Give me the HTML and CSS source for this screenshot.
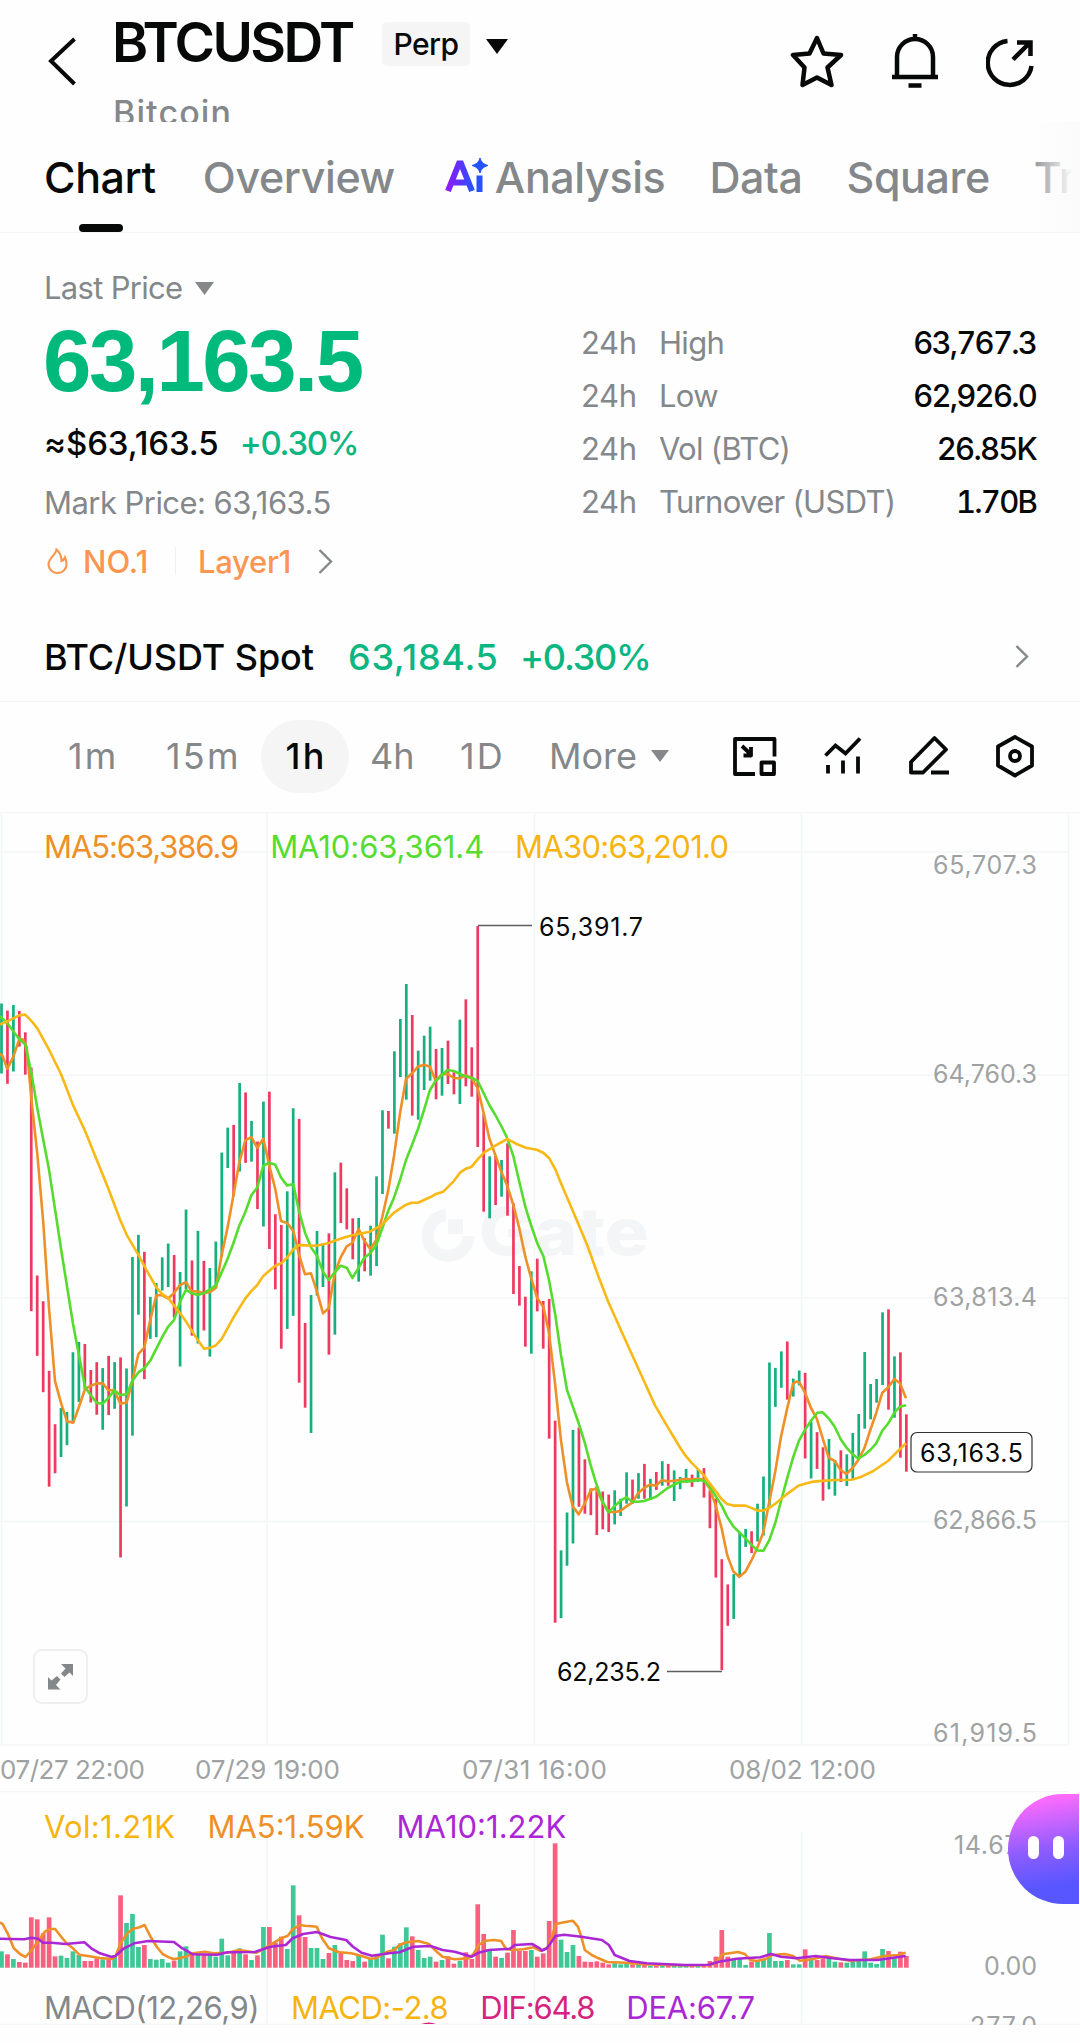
FILE: index.html
```html
<!DOCTYPE html>
<html lang="en">
  <head>
    <meta charset="UTF-8" />
    <meta name="viewport" content="width=device-width, initial-scale=1.0" />
    <title>BTCUSDT Perp</title>
    <link rel="stylesheet" href="styles.css">
  </head>
  <body>
    <header class="header">
      <svg class="back" width="34" height="52" viewBox="0 0 34 52"><path d="M28.500 4 5 26l23.500 23" /></svg>
      <div class="pair">
        <div class="pair-row">
          <h1>BTCUSDT</h1>
          <span class="perp">Perp</span>
          <svg width="22" height="15" viewBox="0 0 22 15"><path d="M0 0h22L11 15z" fill="#070808" /></svg>
        </div>
        <div class="pair-name">Bitcoin</div>
      </div>
      <div class="header-icons">
        <svg width="54" height="54" viewBox="0 0 54 54"><path d="M27 4l6.500 15.500 17.500 1.500-13.500 12.500 4 17.500L27 43.500 12.500 51l2-17.500L3 21l16.500-1.500z" stroke-linejoin="round" /></svg>
        <svg width="46" height="54" viewBox="0 0 46 54"><path d="M23 0v6M5 43V23a18 18 0 0 1 36 0v20M0 43h46M16.500 51.500h13" /></svg>
        <svg width="48" height="54" viewBox="0 0 48 54"><path d="M21.500 7A22 22 0 1 0 45.500 32M27 25.500 43.500 9M31 8.500h13.500V22" /></svg>
      </div>
    </header>

    <nav class="tabs">
      <a class="tab active">Chart</a>
      <a class="tab">Overview</a>
      <a class="tab tab-ai">
        <svg width="44" height="36" viewBox="0 0 44 36">
          <defs>
            <linearGradient id="ai" x1="0" x2="1"><stop offset="0" stop-color="#8a1cff" /><stop offset="0.7" stop-color="#4b3dff" /><stop offset="1" stop-color="#2453ff" /></linearGradient>
          </defs>
          <path d="M3 33 14 5.500h2L27 33M7.500 24.500h15" fill="none" stroke="url(#ai)" stroke-width="6" />
          <path d="M34.500 17.500V34" stroke="#2b50ff" stroke-width="6" />
          <path d="M35 0q1.500 6 8 7.500-6.500 1.500-8 7.500-1.500-6-8-7.500Q33.500 6 35 0z" fill="#2453ff" stroke="#2453ff" stroke-linejoin="round" />
        </svg>
        <span>Analysis</span>
      </a>
      <a class="tab tab-data">Data</a>
      <a class="tab tab-square">Square</a>
      <a class="tab tab-trade">Trade</a>
    </nav>

    <section class="summary">
      <div class="price-col">
        <div class="last-label">Last Price <svg width="19" height="13" viewBox="0 0 19 13"><path d="M0 0h19L9.500 13z" fill="#84888a" /></svg></div>
        <div class="last-price">63,163.5</div>
        <div class="fiat"><span>≈$63,163.5</span><span class="up">+0.30%</span></div>
        <div class="mark">Mark Price: 63,163.5</div>
        <div class="tags">
          <svg class="flame" width="21" height="26" viewBox="0 0 21 26"><path d="M9.500 1.500C9.500 6 1.500 10 1.500 16.500a9 8.500 0 0 0 18 0c0-3-.5-5-1.500-7-.8 2-1.800 3-3.500 3.500C14.500 8 12.500 4 9.500 1.500z" /></svg>
          <span class="tag-no">NO.1</span>
          <i class="tag-line"></i>
          <span class="tag-layer">Layer1</span>
          <svg class="arrow" width="15" height="25" viewBox="0 0 15 25"><path d="M1.500 1 13 12.500 1.500 24" /></svg>
        </div>
      </div>
      <div class="stats">
        <div class="stat"><span class="day">24h</span><span class="name">High</span><b>63,767.3</b></div>
        <div class="stat"><span class="day">24h</span><span class="name">Low</span><b>62,926.0</b></div>
        <div class="stat"><span class="day">24h</span><span class="name">Vol (BTC)</span><b>26.85K</b></div>
        <div class="stat"><span class="day">24h</span><span class="name">Turnover (USDT)</span><b>1.70B</b></div>
      </div>
    </section>

    <section class="spot">
      <span class="spot-name">BTC/USDT Spot</span>
      <span class="spot-price">63,184.5</span>
      <span class="spot-change">+0.30%</span>
      <svg class="arrow" width="14" height="23" viewBox="0 0 14 23"><path d="M1.500 1 12 11.500 1.500 22" /></svg>
    </section>

    <section class="toolbar">
      <div class="intervals">
        <span class="m1">1m</span>
        <span class="m15">15m</span>
        <span class="h1 selected">1h</span>
        <span class="h4">4h</span>
        <span class="d1">1D</span>
        <span class="more">More <svg width="18" height="12" viewBox="0 0 18 12"><path d="M0 0h18L9 12z" fill="#84888a" /></svg></span>
      </div>
      <div class="tools">
        <svg width="44" height="44" viewBox="0 0 44 44"><path d="M41.500 22.500V5H2v35h20M28.500 28.500H41V40H28.500zM9 12l9 8.500M10.500 21.500H18V13" stroke-linejoin="round" /></svg>
        <svg width="38" height="44" viewBox="0 0 38 44"><path d="M1.500 21.500 11.500 11.500 21.500 19.500 36 4.500M4 31v8.500M19 26.500v13M34 22.500v17" /></svg>
        <svg width="40" height="44" viewBox="0 0 40 44"><path d="M25.500 4 37 15.500 14 38.500H2V28zM22 38.500h18" stroke-linejoin="round" /></svg>
        <svg width="38" height="44" viewBox="0 0 38 44"><path d="M19 3l17 9.500v19L19 41.500 2 31.500v-19z" stroke-linejoin="round" /><circle cx="19" cy="22" r="5" /></svg>
      </div>
    </section>

    <section class="price-chart">
      <svg id="priceChart" width="1080" height="979" viewBox="0 812 1080 979">
        <g class="grid">
          <path d="M0 812.500H1080M0 852H1068M0 1075H1068M0 1298H1068M0 1521.500H1068M0 1745H1068" />
          <path d="M1.500 812V1745M267 812V1745M534.500 812V1745M801.500 812V1745M1068.500 812V1745" />
        </g>
        <g class="watermark">
          <path d="M446 1215a20.500 20.500 0 1 0 22.500 21" />
          <rect x="448" y="1219" width="15" height="15" />
          <text x="479" y="1255" textLength="170" lengthAdjust="spacingAndGlyphs">Gate</text>
        </g>
        <g id="candles"></g>
        <g id="averages" class="line"></g>
        <g class="callout">
          <path d="M478 925.500H532M667 1671.500H722" />
          <text x="539" y="936" textLength="104">65,391.7</text>
          <text x="557" y="1681" textLength="104">62,235.2</text>
        </g>
        <g class="axis">
          <text x="933" y="874" textLength="104">65,707.3</text>
          <text x="933" y="1083" textLength="104">64,760.3</text>
          <text x="933" y="1306" textLength="104">63,813.4</text>
          <text x="933" y="1529" textLength="104">62,866.5</text>
          <text x="933" y="1742" textLength="104">61,919.5</text>
        </g>
        <g class="axis date">
          <text x="0" y="1779" textLength="145">07/27 22:00</text>
          <text x="195" y="1779" textLength="145">07/29 19:00</text>
          <text x="462" y="1779" textLength="145">07/31 16:00</text>
          <text x="729" y="1779" textLength="147">08/02 12:00</text>
        </g>
        <g class="current">
          <rect x="911" y="1432.500" width="121" height="39.500" rx="6" />
          <text x="920" y="1461.500" textLength="103">63,163.5</text>
        </g>
      </svg>
      <div class="legend legend-ma">
        <span class="orange ma5">MA5:63,386.9</span>
        <span class="green ma10">MA10:63,361.4</span>
        <span class="yellow ma30">MA30:63,201.0</span>
      </div>
      <div class="expand">
        <svg width="26" height="27" viewBox="0 0 26 27"><path d="M13 1h12v12l-3.500-3.500-5 4.500-3.500-3.500 4.500-5zM0 14l3.500 3.500L9 13l3.500 3.500L8 22l4.500 4.500H0z" fill="#84888a" /></svg>
      </div>
    </section>

    <section class="volume-chart">
      <svg id="volumeChart" width="1080" height="234" viewBox="0 1791 1080 234">
        <g class="grid">
          <path d="M0 1791.500H1068M0 2024.500H1080M267 1832V2024M534.500 1832V2024M801.500 1832V2024" />
        </g>
        <g id="volumes"></g>
        <g id="volumeAverages" class="line"></g>
        <path d="M421 2024q8-3 15 0z" fill="#d6247e" />
        <g class="axis">
          <text x="954" y="1854" textLength="82">14.67K</text>
          <text x="984" y="1975" textLength="53">0.00</text>
          <text x="970" y="2035" textLength="67">277.0</text>
        </g>
      </svg>
      <div class="legend legend-vol">
        <span class="yellow vol">Vol:1.21K</span>
        <span class="orange">MA5:1.59K</span>
        <span class="purple">MA10:1.22K</span>
      </div>
      <div class="legend legend-macd">
        <span class="gray">MACD(12,26,9)</span>
        <span class="yellow">MACD:-2.8</span>
        <span class="pink">DIF:64.8</span>
        <span class="purple dea">DEA:67.7</span>
      </div>
      <div class="assistant"><i></i><i></i></div>
    </section>

    <script src="chart.js"></script>
  </body>
</html>
```

FILE: styles.css
```css
* {
  margin: 0;
  padding: 0;
  box-sizing: border-box;
}

body {
  width: 1080px;
  height: 2043px;
  overflow: hidden;
  background: #fefefe;
  color: #070808;
  font-family: Inter, "Liberation Sans", sans-serif;
  font-size: 31px;
}

svg {
  display: block;
  flex: none;
}

/* header */
.header {
  display: flex;
  height: 122px;
  overflow: hidden;
  padding: 0 46px;
}

.back {
  margin-top: 35px;
}

.back path {
  fill: none;
  stroke: #070808;
  stroke-width: 4;
}

.pair {
  margin-left: 32px;
}

.pair-row {
  display: flex;
  align-items: center;
  height: 84px;
}

h1 {
  width: 270px;
  font-size: 55px;
  font-weight: 600;
  letter-spacing: -2.6px;
}

.perp {
  width: 88px;
  height: 44px;
  margin: 4px 16px 0 0;
  border-radius: 5px;
  background: #f5f5f5;
  font-size: 30px;
  font-weight: 500;
  line-height: 44px;
  text-align: center;
  letter-spacing: -0.5px;
}

.pair-row svg {
  margin-top: 8px;
}

.pair-name {
  padding-left: 1px;
  color: #84888a;
  font-size: 34px;
  font-weight: 500;
  line-height: 58px;
  letter-spacing: 1.1px;
}

.header-icons {
  display: flex;
  gap: 48px;
  margin: 34px 0 0 auto;
}

.header-icons path {
  fill: none;
  stroke: #070808;
  stroke-width: 4.5;
}

/* tabs */
.tabs {
  position: relative;
  display: flex;
  align-items: center;
  gap: 47px;
  height: 111px;
  padding-left: 44px;
  overflow: hidden;
  border-bottom: 1px solid #f3f4f5;
  font-size: 43px;
  font-weight: 500;
  letter-spacing: -0.4px;
  white-space: nowrap;
  color: #84888a;
}

.tabs::after {
  content: "";
  position: absolute;
  top: 0;
  right: 0;
  width: 48px;
  height: 110px;
  background: linear-gradient(90deg, rgba(254, 254, 254, 0.1), #fbfbfb 85%);
}

.tab {
  position: relative;
}

.tab.active {
  color: #070808;
}

.tab.active::after {
  content: "";
  position: absolute;
  left: 35px;
  bottom: -29px;
  width: 44px;
  height: 8px;
  border-radius: 4px;
  background: #070808;
}

.tab-ai {
  display: flex;
  gap: 6px;
  margin-left: 3px;
}

.tab-ai svg {
  margin-top: 7px;
}

.tab-data,
.tab-square,
.tab-trade {
  margin-left: -3px;
}

/* price summary */
.summary {
  display: flex;
  justify-content: space-between;
  height: 379px;
  padding: 34px 44px 0 44px;
  color: #84888a;
}

.last-label {
  display: flex;
  align-items: center;
  gap: 13px;
  line-height: 42px;
  letter-spacing: -0.7px;
}

.last-price {
  margin-left: -1px;
  color: #00ba7c;
  font-family: "Liberation Sans", sans-serif;
  font-size: 87px;
  font-weight: 700;
  line-height: 104px;
  letter-spacing: -2.5px;
}

.fiat {
  display: flex;
  color: #070808;
  font-size: 33px;
  font-weight: 500;
  line-height: 60px;
  letter-spacing: -0.1px;
}

.up {
  margin-left: 21px;
  color: #0cb681;
  letter-spacing: -1.3px;
}

.mark {
  line-height: 60px;
  letter-spacing: -0.55px;
}

.tags {
  display: flex;
  align-items: center;
  height: 56px;
  color: #fb9650;
  font-weight: 500;
}

.flame {
  margin: 0 15px 0 3px;
}

.flame path {
  fill: none;
  stroke: #fb9650;
  stroke-width: 2.2;
}

.tag-no {
  width: 92px;
}

.tag-line {
  width: 1px;
  height: 28px;
  background: #f0f0f0;
}

.tag-layer {
  width: 120px;
  padding-left: 22px;
  letter-spacing: -0.3px;
}

.tag-layer + .arrow {
  margin-left: 22px;
}

.arrow path {
  fill: none;
  stroke: #84888a;
  stroke-width: 2.4;
}

.stats {
  width: 455px;
  padding-top: 49px;
}

.stat {
  display: flex;
  line-height: 53px;
  letter-spacing: -0.7px;
}

.stat .day {
  width: 78px;
  letter-spacing: -0.4px;
}

.stat b {
  margin-left: auto;
  color: #070808;
  font-weight: 500;
  font-variant-numeric: tabular-nums;
  letter-spacing: -1.8px;
}

/* spot row */
.spot {
  display: flex;
  align-items: center;
  height: 90px;
  padding: 0 51px 0 44px;
  border-bottom: 1px solid #f3f4f5;
  font-size: 36px;
  font-weight: 500;
}

.spot-name {
  width: 304px;
  letter-spacing: -0.1px;
}

.spot-price {
  width: 172px;
  color: #0cb681;
  letter-spacing: 0.7px;
}

.spot-change {
  color: #0cb681;
  letter-spacing: -1.2px;
}

.spot .arrow {
  margin-left: auto;
}

/* intervals and tools */
.toolbar {
  display: flex;
  align-items: center;
  justify-content: space-between;
  height: 110px;
  padding: 0 46px 2px 68px;
}

.intervals {
  display: flex;
  align-items: center;
  color: #84888a;
  font-size: 36px;
}

.m1,
.m15,
.h1 {
  letter-spacing: 2.2px;
}

.m1 {
  width: 98px;
}

.m15 {
  width: 95px;
}

.selected {
  width: 88px;
  height: 73px;
  padding-left: 2px;
  border-radius: 37px;
  background: #f5f5f5;
  color: #070808;
  font-weight: 500;
  line-height: 73px;
  text-align: center;
}

.h4 {
  width: 90px;
  padding-left: 21px;
}

.d1 {
  width: 88px;
  padding-left: 21px;
  letter-spacing: 2px;
}

.more {
  display: flex;
  align-items: center;
  gap: 14px;
  padding-left: 22px;
}

.tools {
  display: flex;
  gap: 47px;
}

.tools path,
.tools circle {
  fill: none;
  stroke: #070808;
  stroke-width: 3.8;
}

/* charts */
.price-chart,
.volume-chart {
  position: relative;
}

.grid path {
  fill: none;
  stroke: #f4f5f6;
  stroke-width: 1.5;
}

.line path {
  fill: none;
  stroke-width: 2.6;
  stroke-linejoin: round;
}

.watermark path {
  fill: none;
  stroke: #f4f5f6;
  stroke-width: 12;
}

.watermark rect,
.watermark text {
  fill: #f4f5f6;
}

.watermark text {
  font-size: 66px;
  font-weight: 800;
}

.axis text,
.callout text,
.current text {
  font-size: 25px;
  fill: #9fa2a3;
}

.axis.date text {
  font-size: 26px;
}

.callout path {
  stroke: #5c5e60;
  stroke-width: 1.4;
}

.callout text,
.current text {
  fill: #070808;
}

.current rect {
  fill: #fefefe;
  stroke: #333;
  stroke-width: 1.2;
}

.legend {
  position: absolute;
  left: 44px;
  display: flex;
  gap: 32px;
  line-height: 40px;
  white-space: nowrap;
}

.legend-ma {
  top: 15px;
}

.ma5 {
  letter-spacing: -1.1px;
}

.ma10 {
  letter-spacing: -0.1px;
}

.ma30 {
  margin-left: -1px;
  letter-spacing: -0.7px;
}

.legend-vol {
  top: 16px;
}

.vol {
  letter-spacing: 0.3px;
}

.legend-macd {
  top: 197px;
  letter-spacing: -0.5px;
}

.orange {
  color: #ee9027;
}

.green {
  color: #56dc2e;
}

.yellow {
  color: #f8b40e;
}

.purple {
  color: #ab27d5;
}

.pink {
  color: #d6247e;
  letter-spacing: -1.2px;
}

.dea {
  letter-spacing: -0.2px;
}

.gray {
  color: #84888a;
}

.expand {
  position: absolute;
  left: 33px;
  top: 837px;
  display: flex;
  align-items: center;
  justify-content: center;
  width: 55px;
  height: 55px;
  border: 2px solid #efefef;
  border-radius: 9px;
  background: #fefefe;
}

.assistant {
  position: absolute;
  top: 3px;
  right: 1px;
  display: flex;
  gap: 14px;
  width: 71px;
  height: 110px;
  padding: 42px 0 0 20px;
  border-radius: 55px 0 0 55px;
  background: linear-gradient(170deg, #ff6bfd 8%, #8b5cff 52%, #5856ff 82%);
}

.assistant i {
  width: 11px;
  height: 23px;
  border-radius: 6px;
  background: #fff;
}
```

FILE: chart.js
```js
const STEP = 5.953;
const FIRST = 1.5;
const UP = "#16b07f";
const DOWN = "#ee3a60";
const VOLUME_BASE = 1967.7;

// each block: origin y, units per pixel, then g (rising) or r (falling) with high,low
const candleBlocks = [
  [960, 2.529, `g110,287 r128,313 g114,282 r129,219 r183,290 r272,888 r798,1001 r863,1093 r1039,1332
    r1174,1298 g1133,1257 g1143,1227 g992,1170 g966,1118 r971,1085 r1037,1119 r1017,1150 g1032,1188
    r1001,1151 g1017,1135 r1005,1511 g1033,1382 g751,1203 g695,897 r738,1060 g852,958 g817,954
    g752,836 g717,827 r746,904 g789,1028 g631,832 r760,950 g685,970 r761,937 g779,1003 g712,830
    g487,750 g424,526 r417,597 g311,535 r335,513 g407,510 r459,630 g358,674 r333,731 r643,833
    r670,983 g585,933 g375,900 r402,1069`],
  [900, 3, `r1269,1523 g1185,1599 g993,1187 g1030,1161 r1000,1364 g817,1304 r788,969 r865,988
    r955,1078 g954,1145 r1015,1114 g977,1127 g829,1098 g631,882 r633,686 g454,701 g357,531
    g252,599 r345,647 g452,659 g407,570 g380,542 r447,598 g444,587 r422,552 r517,583 g359,612
    r298,559 r442,590 r78,741 r642,935 g769,955 r768,915 g780,890 r730,947 r910,1182 r1098,1217
    r1190,1340 g1114,1361 r1076,1234 r1203,1346`],
  [1100, 2.6133, `r520,885 r838,1366 g1177,1354 g1078,1217 g862,1159 r856,1063 r939,1081 r1015,1085
    r1010,1137 r1023,1122 r1031,1129 g1020,1109 g1042,1087 g973,1055 r992,1055 g975,1042 r951,1042
    g990,1045 r972,1019 g944,1008 r951,1008 g968,1048 g985,1017 g964,1000 r979,1011 g965,998
    r962,1039 r1020,1119 r1042,1248 r1200,1490 r1266,1374 g1239,1356 g1128,1245 g1121,1168
    r1127,1184 g1055,1154 g984,1138 g686,1060 g700,802 g657,752 r631,783 g728,775 g707,746
    r713,937 g841,989 r868,964`],
  [1280, 3, `r502,662 g477,628 g540,647 r511,606 g523,618 g459,600 g402,540 g216,446 g312,418
    g297,368 g97,315 r88,389 g229,413 r217,533 r403,575`],
];

// line blocks: origin x, origin y, units per pixel on x and y, points
const A = [0, 960, 3, 2.529];
const B = [300, 900, 3, 3];
const C = [520, 1100, 3, 2.6133];
const D = [760, 1280, 3, 3];
const V1 = [0, 1640, 2.9037, 3];
const V2 = [540, 1640, 2.9037, 3];

const ma30 = [
  [A, `0,163 22,155 58,140 76,138 95,155 112,173 148,228 184,290 219,367 255,432 290,505 325,578
    361,658 380,695 415,745 440,785 469,828 487,845 505,855 540,893 560,917 590,957 612,983 629,981
    647,975 665,958 700,905 735,857 755,836 772,822 790,799 825,774 845,766 861,753 880,732 897,721`],
  [B, `50,1037 86,1029 104,1022 140,1010 170,1003 210,995 245,975 282,938 318,914 335,908 354,908
    390,892 410,881 430,875 460,845 480,818 498,806 515,800 535,776 553,757 586,737 622,717 650,732
    677,743 710,749 730,758 748,775 766,808 785,855 820,936 862,1036 897,1134`],
  [C, `265,528 320,635 380,750 405,798 440,850 480,908 497,930 515,948 533,964 551,980 569,1002
    587,1022 604,1042 622,1056 640,1060 676,1060 694,1066 712,1073 730,1073 748,1066 766,1055
    801,1030 835,1008 855,1003 875,998 897,996`],
  [D, "225,600 275,599 300,592 340,573 385,542 420,507 438,490"],
];

const ma5 = [
  [A, `0,237 8,243 22,275 40,245 58,200 70,201 80,220 95,360 112,490 130,665 147,880 165,1065
    183,1120 201,1167 220,1170 237,1130 255,1085 272,1077 290,1071 308,1070 325,1088 343,1088
    361,1122 380,1119 397,1065 415,997 433,980 451,910 469,848 487,848 505,856 522,842 540,822
    558,815 575,838 593,838 612,843 630,840 648,829 665,745 683,675 700,597 718,512 736,456 754,448
    772,475 790,452 808,520 826,580 843,660 861,665 880,685 897,745`],
  [B, `15,1123 33,1120 51,1175 69,1240 86,1225 104,1120 122,1072 140,1039 157,1029 176,987 193,1022
    211,1047 229,1020 247,950 265,870 282,768 300,640 318,537 336,520 354,500 372,494 390,500
    407,543 425,524 443,521 461,534 479,535 498,525 515,535 533,565 551,640 568,715 586,765 604,815
    622,858 640,915 658,985 676,1070 693,1133 712,1195 730,1220`],
  [C, `87,608 105,740 123,890 141,1000 158,1062 176,1083 194,1055 212,1020 229,1015 247,1050
    265,1076 283,1077 301,1074 319,1062 337,1052 355,1027 372,1014 390,1005 408,1008 426,993
    443,997 461,995 479,993 497,990 515,992 533,990 551,992 569,1015 587,1060 605,1120 622,1190
    640,1232 658,1246 676,1233 694,1204 712,1170 730,1130 748,1050 766,970 783,880 801,808 819,742
    828,736 838,738 855,765 873,805`],
  [D, `170,415 188,475 206,533 224,543 242,570 259,582 277,565 295,540 313,505 331,450 349,398
    367,338 385,322 403,297 420,310 438,355`],
];

const ma10 = [
  [A, `0,142 22,160 40,180 58,200 76,214 95,290 112,375 130,455 147,530 165,630 183,730 201,825
    219,920 237,1000 255,1080 272,1100 290,1120 308,1122 325,1108 343,1088 361,1100 380,1098
    397,1065 415,1043 433,1032 451,1013 487,953 505,927 522,911 540,865 558,834 575,843 593,847
    612,842 630,833 648,822 665,790 683,755 700,717 718,672 736,638 754,595 772,575 790,520 808,513
    826,518 843,550 861,570 880,567 897,635`],
  [B, `15,998 33,1042 51,1068 69,1115 86,1140 104,1117 122,1097 140,1103 157,1134 176,1103 193,1073
    211,1060 229,1035 247,985 265,932 282,893 300,840 318,780 336,735 354,687 372,630 390,570
    407,542 425,525 443,510 461,513 479,521 498,530 515,533 533,543 551,580 568,615 586,645 604,678
    622,715 640,768 658,845 676,920 693,975 712,1030 730,1068 747,1140 766,1245 783,1365 801,1470`],
  [C, `158,800 176,845 194,895 212,955 229,1003 247,1048 265,1077 283,1062 301,1048 319,1038
    337,1050 355,1050 372,1048 390,1043 408,1037 426,1025 443,1014 461,1006 479,998 497,997 515,996
    533,993 551,995 569,1010 587,1035 605,1060 622,1090 640,1114 658,1130 676,1145 694,1162
    712,1177 730,1178 748,1150 766,1105 783,1048 801,990 819,935 837,890 855,862 873,838`],
  [D, `172,398 188,397 206,415 224,440 242,478 259,502 277,522 295,536 313,525 331,510 349,490
    367,452 385,430 403,398 420,380 438,376`],
];

const volumeMa5 = [
  [V1, `0,847 8,853 22,880 40,925 58,942 74,951 92,930 110,905 130,875 147,867 160,867 180,893
    195,912 212,925 230,944 260,949 290,954 325,957 335,950 350,910 370,880 385,867 405,862 420,855
    437,890 455,920 472,942 490,952 505,958 540,950 560,940 595,935 620,940 660,938 695,930 745,938
    780,918 800,905 820,893 835,888 850,868 870,855 885,857 905,859 920,860 935,895 955,925 985,937
    1020,940 1050,948 1075,956 1090,955 1125,935 1145,930 1160,915 1180,907 1215,903 1245,912
    1265,932 1285,950 1320,958 1360,955 1375,942 1390,915 1410,902 1435,900 1455,903 1470,928
    1490,930 1520,928 1550,922 1567,932`],
  [V2, `20,925 35,890 45,852 70,847 95,842 110,860 120,890 130,930 150,945 170,955 195,966 250,968
    300,973 400,976 490,976 510,970 530,943 575,936 595,942 610,960 630,963 655,957 675,945 710,942
    735,948 755,962 790,958 830,948 860,955 900,962 960,958 1000,948 1040,945 1062,938`],
];

const volumeMa10 = [
  [V1, `0,896 70,898 92,893 110,896 125,908 150,908 190,912 245,907 265,925 290,940 325,951 335,948
    360,925 390,910 430,903 505,906 525,922 560,943 630,944 660,937 740,936 785,920 830,915 850,895
    880,882 920,876 960,891 1005,900 1025,920 1050,938 1080,947 1130,940 1160,937 1200,920 1250,918
    1285,930 1320,935 1370,950 1390,938 1420,930 1480,926 1495,915 1545,912 1567,925`],
  [V2, `5,932 20,925 45,888 70,884 120,890 180,900 200,915 217,945 260,963 310,970 420,975 490,974
    520,965 570,956 640,952 670,942 700,950 745,955 800,948 850,955 900,960 980,960 1062,948`],
];

// bar tops, three units per pixel from y = 1640
const volumes = [
  934, 943, 957, 966, 968, 832, 838, 880, 832, 949, 947, 954, 934, 945, 963, 963, 955, 958, 955, 945,
  766, 849, 822, 921, 915, 957, 959, 957, 968, 962, 934, 919, 944, 943, 945, 945, 950, 896, 946, 937,
  925, 943, 960, 946, 861, 861, 908, 890, 927, 736, 826, 891, 924, 924, 957, 939, 915, 935, 960, 963,
  947, 965, 955, 945, 884, 955, 920, 910, 862, 889, 930, 954, 950, 965, 960, 949, 971, 962, 937, 957,
  793, 882, 930, 950, 954, 938, 870, 933, 933, 930, 950, 940, 843, 610, 899, 936, 915, 948, 965, 966,
  964, 968, 973, 970, 973, 972, 973, 975, 975, 977, 977, 976, 977, 976, 977, 977, 976, 977, 977, 963,
  950, 870, 950, 960, 955, 975, 965, 962, 960, 879, 963, 963, 960, 973, 973, 928, 955, 960, 955, 955,
  965, 967, 968, 962, 962, 934, 968, 972, 927, 933, 955, 935, 948,
];

const candles = candleBlocks.flatMap(([top, scale, text]) =>
  text.split(/\s+/).map((item) => {
    const [high, low] = item.slice(1).split(",").map(Number);
    return { up: item[0] === "g", high: top + high / scale, low: top + low / scale };
  })
);

function bar(x, y, width, height, color) {
  return `<rect x="${x - width / 2}" y="${y}" width="${width}" height="${height}" fill="${color}" />`;
}

function line(blocks, color) {
  const points = blocks.flatMap(([[x0, y0, sx, sy], text]) =>
    text.split(/\s+/).map((pair) => {
      const [x, y] = pair.split(",").map(Number);
      return `${(x0 + x / sx).toFixed(1)} ${(y0 + y / sy).toFixed(1)}`;
    })
  );
  return `<path d="M${points.join("L")}" stroke="${color}" />`;
}

document.getElementById("candles").innerHTML = candles
  .map((c, i) => bar(FIRST + STEP * i, c.high, 2.7, c.low - c.high, c.up ? UP : DOWN))
  .join("");

document.getElementById("averages").innerHTML =
  line(ma5, "#ee9027") + line(ma10, "#56dc2e") + line(ma30, "#f8b916");

document.getElementById("volumes").innerHTML = volumes
  .map((v, i) => {
    const y = 1640 + v / 3;
    return bar(FIRST + STEP * i, y, 4.7, VOLUME_BASE - y, candles[i].up ? "#3fc796" : "#f8607f");
  })
  .join("");

document.getElementById("volumeAverages").innerHTML =
  line(volumeMa5, "#ee9027") + line(volumeMa10, "#ab27d5");
```
